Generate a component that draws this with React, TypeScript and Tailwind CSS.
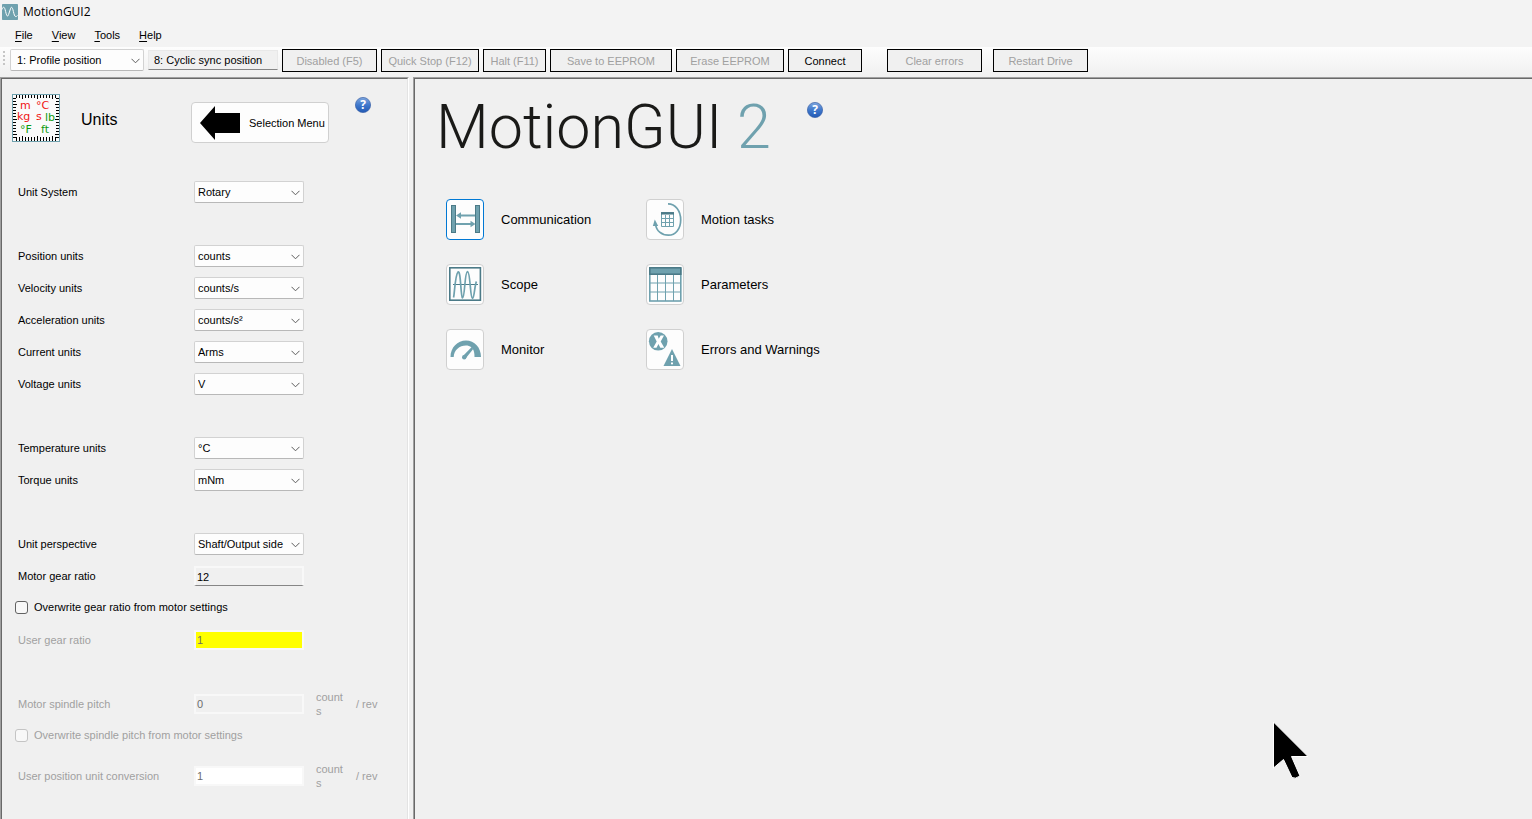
import React from "react";

const TEAL = "#6fa1ae";
const DEEP = "#4b7a87";

function HelpIcon() {
  return (
    <svg viewBox="0 0 16 16" className="block h-4 w-4">
      <defs>
        <linearGradient id="help" x1="0" y1="0" x2="0" y2="1">
          <stop offset="0" stopColor="#7fa6dd" />
          <stop offset="0.5" stopColor="#3f78cc" />
          <stop offset="1" stopColor="#2259b4" />
        </linearGradient>
      </defs>
      <circle cx="8" cy="8" r="7.6" fill="url(#help)" stroke="#3b62a8" strokeWidth="0.7" />
      <text x="8" y="12.4" textAnchor="middle" fontSize="12" fontWeight="700" fill="#fff" fontFamily="Open Sans, sans-serif">?</text>
    </svg>
  );
}

function HelpButton() {
  return (
    <button type="button" aria-label="Help" className="h-4 w-4">
      <HelpIcon />
    </button>
  );
}

function AppLogo() {
  return (
    <svg viewBox="0 0 16 16" className="h-4 w-4">
      <rect width="16" height="16" rx="0.8" fill={TEAL} />
      <path d="M0 5.5C1.5 1.5 2.6 3 3.6 7.5C4.6 12 5.6 13.5 6.6 10.5L8.4 5C9.4 2 10.4 3 11.4 7.5C12.4 12 13.2 14 15.5 11.5" fill="none" stroke="#fff" strokeWidth="1" />
    </svg>
  );
}

function UnitsIcon() {
  const ticks = Array.from({ length: 14 }, (_, i) => 5 + i * 3);
  return (
    <svg viewBox="0 0 48 48" className="h-12 w-12" fontFamily="DejaVu Sans, sans-serif" fontSize="11">
      <rect x="0.5" y="0.5" width="47" height="47" fill="#fafafa" stroke={TEAL} />
      {ticks.map((t, i) => {
        const n = i % 5 === 2 ? 4 : 3;
        return (
          <path
            key={t}
            d={`M${t - 0.5} 1v${n}M${t - 0.5} 47v${-n - 1}M1 ${t - 0.5}h${n}M47 ${t - 0.5}h${-n}`}
            stroke="#000"
            strokeWidth="1"
          />
        );
      })}
      <text x="8" y="15" fill="#f01414">m</text>
      <text x="24" y="15" fill="#f01414">°C</text>
      <text x="5" y="26" fill="#f01414">kg</text>
      <text x="24" y="26" fill="#f01414">s</text>
      <text x="33" y="27" fill="#109c10">lb</text>
      <text x="8" y="39" fill="#109c10">°F</text>
      <text x="29" y="39" fill="#109c10">ft</text>
    </svg>
  );
}

function CommunicationIcon() {
  return (
    <>
      <g fill={TEAL} stroke={DEEP}>
        <rect x="4.5" y="5.5" width="4" height="27" />
        <rect x="28.5" y="5.5" width="4" height="27" />
      </g>
      <path d="M12 15.5h16M9 24h16" stroke={TEAL} strokeWidth="2" />
      <path d="M9 15.5l5-3.2v6.4zM28.5 24l-5-3.2v6.4z" fill={TEAL} />
    </>
  );
}

function ScopeIcon() {
  return (
    <g fill="none">
      <rect x="2.8" y="2.8" width="30.6" height="32.4" stroke={DEEP} strokeWidth="1.6" />
      <path d="M6 19.5h25" stroke={DEEP} />
      <path d="M6.5 32.500C7.500 30 8 10 11 7C14 5 13.500 31 15.500 33C18 33 17.500 7 20.500 6.500C23.500 7 23 33 25.500 33.500C27.500 33 27.500 20 29.500 16.500" stroke={TEAL} strokeWidth="1.7" />
    </g>
  );
}

function MonitorIcon() {
  return (
    <g fill={TEAL}>
      <path d="M3.500 27C3.500 17.500 10.500 10.500 19 10.500S34 17.500 34 27H27.500C27.500 23.500 27 21.300 26 19.300L24.300 17.200C22.800 16 21 15.500 19 15.500C12.500 15.500 7 20 6.700 27Z" />
      <path d="M24.700 17L16.200 25.800L18.600 28.600L26.200 19Z" />
      <circle cx="17.200" cy="27.300" r="2.200" />
    </g>
  );
}

function MotionIcon() {
  return (
    <>
      <path d="M21 3.800C28.500 3.800 33.700 11 33.700 20S28.500 35.200 21.500 35.200C14.500 35.200 9.300 31 8.500 24" fill="none" stroke={TEAL} strokeWidth="1.700" />
      <path d="M7.800 19.500l-2 6.500h5.400z" fill={TEAL} />
      <path d="M14.500 13h12v13.500h-12zM18.500 15v12M22.500 15v12M15 18.500h12M15 22.500h12" fill="none" stroke={TEAL} />
      <path d="M14 13.300h13" stroke={DEEP} strokeWidth="2.500" />
    </>
  );
}

function ParametersIcon() {
  return (
    <g fill="none" stroke={TEAL}>
      <rect x="2.800" y="4" width="31" height="32" strokeWidth="1.600" />
      <path d="M10.500 10v26M18.500 10v26M26.500 10v26M3 18h31M3 27h31" />
      <rect x="2.800" y="2.800" width="31" height="6.400" fill={TEAL} stroke={DEEP} strokeWidth="1.600" />
    </g>
  );
}

function ErrorsIcon() {
  return (
    <>
      <circle cx="11.200" cy="11.300" r="9.300" fill={TEAL} />
      <path d="M6.700 5.500h4l1 3.200L13.700 5.500h3.300l-3.300 6l3.600 6.300h-4L11.500 14L9.500 17.800H6.200L9.700 11.500Z" fill="#fff" />
      <path d="M25 19L33.500 36H16.500Z" fill={TEAL} />
      <rect x="24" y="25" width="2" height="6" fill="#fff" />
      <rect x="24" y="32.500" width="2" height="1.800" fill="#fff" />
    </>
  );
}

function Drop({ id, label, value, options, className }: { id: string; label?: string; value: string; options?: string[]; className: string }) {
  return (
    <span className="relative block">
      <select
        id={id}
        aria-label={label}
        defaultValue={value}
        className={`block h-[22px] appearance-none rounded-xs border border-[#d2d2d2] border-b-[#b8b8b8] bg-[#fdfdfd] text-[11px] leading-4 text-black ${className}`}
      >
        {(options ?? [value]).map((o) => (
          <option key={o}>{o}</option>
        ))}
      </select>
      <svg viewBox="0 0 9 6" className="pointer-events-none absolute top-[9px] right-1 h-1.5 w-[9px]">
        <path d="M0.500 0.800L4.500 4.800L8.500 0.800" fill="none" stroke="#5c5c5c" />
      </svg>
    </span>
  );
}

const fieldClass = "block h-5 w-[110px] border-2 px-px text-[11px] leading-4 outline-none";

function Row({ id, label, muted, tall, children }: { id: string; label: string; muted?: boolean; tall?: boolean; children: React.ReactNode }) {
  return (
    <div className={`flex items-center ${tall ? "h-12" : "h-8"} ${muted ? "text-[#a0a0a0]" : "text-black"}`}>
      <label htmlFor={id} className="w-44 shrink-0">{label}</label>
      {children}
    </div>
  );
}

function PerRev() {
  return (
    <>
      <span className="ml-3 w-7 leading-[14px] break-all">counts</span>
      <span className="ml-3">/ rev</span>
    </>
  );
}

function Check({ id, label, disabled }: { id: string; label: string; disabled?: boolean }) {
  return (
    <div className={`-ml-[3px] flex h-8 items-center gap-1.5 pb-0.5 ${disabled ? "text-[#a0a0a0]" : "text-black"}`}>
      <input
        id={id}
        type="checkbox"
        disabled={disabled}
        className={`h-[13px] w-[13px] appearance-none rounded-[3px] border bg-[#f8f8f8] checked:bg-[#0067c0] ${disabled ? "border-[#c4c4c4]" : "border-[#626262]"}`}
      />
      <label htmlFor={id}>{label}</label>
    </div>
  );
}

function ToolButton({ text, className, enabled }: { text: string; className: string; enabled?: boolean }) {
  return (
    <button
      type="button"
      disabled={!enabled}
      className={`h-[23px] shrink-0 border border-black bg-[#f0f0f0] pt-px text-center whitespace-nowrap ${enabled ? "text-black" : "text-[#a0a0a0]"} ${className}`}
    >
      {text}
    </button>
  );
}

function Tile({ text, active, children }: { text: string; active?: boolean; children: React.ReactNode }) {
  const id = text.replace(/ /g, "-").toLowerCase();
  return (
    <div className="flex w-[200px] items-center gap-[17px]">
      <button
        type="button"
        aria-labelledby={id}
        className={`h-[41px] w-[38px] rounded-sm border bg-[#fdfdfd] ${active ? "border-[#0078d4]" : "border-[#d0d0d0]"}`}
      >
        <svg viewBox="0 0 36 39" className="block h-[39px] w-9 overflow-visible">
          {children}
        </svg>
      </button>
      <span id={id} className="text-[13px] leading-4 whitespace-nowrap">{text}</span>
    </div>
  );
}

const menus = ["File", "View", "Tools", "Help"];

export default function App() {
  return (
    <div className="relative flex min-h-screen flex-col overflow-x-hidden bg-[#f0f0f0] font-['Liberation_Sans',Arial,sans-serif] text-[11px] leading-[14px] text-black">
      <header className="flex h-6 items-center gap-[5px] bg-[#f3f3f3] pl-0.5">
        <AppLogo />
        <h1 className="font-['Open_Sans',sans-serif] text-[12px] leading-4">MotionGUI2</h1>
      </header>

      <nav className="flex h-[23px] items-center gap-[19px] bg-[#f3f3f3] pb-0.5 pl-[15px]">
        {menus.map((m) => (
          <button key={m} type="button">
            <span className="underline underline-offset-2">{m[0]}</span>
            {m.slice(1)}
          </button>
        ))}
      </nav>

      <div className="flex h-[30px] items-start bg-linear-to-b from-[#fdfdfd] to-[#f0f0f0] pt-0.5">
        <svg viewBox="0 0 10 22" className="h-[22px] w-2.5 shrink-0">
          <path d="M3 2h2v2h-2zM3 6h2v2h-2zM3 10h2v2h-2zM3 14h2v2h-2z" fill="#c6c6c6" />
        </svg>
        <div className="flex gap-1">
          <Drop id="mode" label="Operating mode" value="1: Profile position" className="w-[134px] pl-1.5" />
          <input
            aria-label="Active mode"
            readOnly
            value="8: Cyclic sync position"
            className="mt-px h-5 w-[130px] border border-[#e8e8e8] border-b-[#868686] bg-[#f0f0f0] px-[5px] text-[11px] leading-4 outline-none"
          />
          <ToolButton text="Disabled (F5)" className="w-[95px]" />
          <ToolButton text="Quick Stop (F12)" className="w-[98px]" />
          <ToolButton text="Halt (F11)" className="w-[63px]" />
          <ToolButton text="Save to EEPROM" className="w-[122px]" />
          <ToolButton text="Erase EEPROM" className="w-[108px]" />
          <ToolButton text="Connect" className="w-[74px]" enabled />
        </div>
        <div className="ml-[25px] flex gap-[11px]">
          <ToolButton text="Clear errors" className="w-[95px]" />
          <ToolButton text="Restart Drive" className="w-[95px]" />
        </div>
      </div>

      <div className="flex grow gap-1">
        <aside className="flex w-[409px] shrink-0 border-t border-r border-l border-t-[#a0a0a0] border-r-white border-l-[#a0a0a0]">
          <div className="grow border-t border-r border-l border-t-[#696969] border-r-[#e3e3e3] border-l-[#696969] pr-4 pl-4">
            <div className="-ml-1.5 flex h-[97px] items-start pt-[15px]">
              <UnitsIcon />
              <h2 className="mt-[18px] ml-[21px] w-[110px] text-[16px] leading-4">Units</h2>
              <button type="button" className="mt-2 flex h-[41px] w-[138px] items-center gap-[9px] rounded-sm border border-[#d0d0d0] bg-[#fdfdfd] pl-2">
                <svg viewBox="0 0 40 34" className="h-[34px] w-10">
                  <path d="M0 17L15 0V7H40V27H15V34Z" fill="#000" />
                </svg>
                Selection Menu
              </button>
              <span className="mt-[3px] ml-[26px]">
                <HelpButton />
              </span>
            </div>

            <form className="flex flex-col gap-8">
              <div>
                <Row id="system" label="Unit System">
                  <Drop id="system" value="Rotary" options={["Rotary", "Linear"]} className="w-[110px] pl-[3px]" />
                </Row>
              </div>
              <div>
                <Row id="position" label="Position units">
                  <Drop id="position" value="counts" className="w-[110px] pl-[3px]" />
                </Row>
                <Row id="velocity" label="Velocity units">
                  <Drop id="velocity" value="counts/s" className="w-[110px] pl-[3px]" />
                </Row>
                <Row id="acceleration" label="Acceleration units">
                  <Drop id="acceleration" value="counts/s²" className="w-[110px] pl-[3px]" />
                </Row>
                <Row id="current" label="Current units">
                  <Drop id="current" value="Arms" className="w-[110px] pl-[3px]" />
                </Row>
                <Row id="voltage" label="Voltage units">
                  <Drop id="voltage" value="V" className="w-[110px] pl-[3px]" />
                </Row>
              </div>
              <div>
                <Row id="temperature" label="Temperature units">
                  <Drop id="temperature" value="°C" className="w-[110px] pl-[3px]" />
                </Row>
                <Row id="torque" label="Torque units">
                  <Drop id="torque" value="mNm" className="w-[110px] pl-[3px]" />
                </Row>
              </div>
              <div>
                <Row id="perspective" label="Unit perspective">
                  <Drop id="perspective" value="Shaft/Output side" className="w-[110px] pl-[3px]" />
                </Row>
                <Row id="gear" label="Motor gear ratio">
                  <input id="gear" readOnly value="12" className={`${fieldClass} border-t-[#f8f8f8] border-r-[#f8f8f8] border-b border-l-[#f8f8f8] border-b-[#868686] bg-[#f0f0f0]`} />
                </Row>
                <Check id="overwrite-gear" label="Overwrite gear ratio from motor settings" />
                <Row id="user-gear" label="User gear ratio" muted>
                  <input id="user-gear" disabled value="1" className={`${fieldClass} border-[#f8f8f8] bg-[#ffff00] text-[#6d6d6d]`} />
                </Row>
              </div>
              <div>
                <Row id="pitch" label="Motor spindle pitch" muted>
                  <input id="pitch" disabled value="0" className={`${fieldClass} border-[#f8f8f8] bg-[#f0f0f0] text-[#6d6d6d]`} />
                  <PerRev />
                </Row>
                <Check id="overwrite-pitch" label="Overwrite spindle pitch from motor settings" disabled />
                <Row id="conversion" label="User position unit conversion" muted tall>
                  <input id="conversion" disabled value="1" className={`${fieldClass} border-[#f8f8f8] bg-white text-[#6d6d6d]`} />
                  <PerRev />
                </Row>
              </div>
            </form>
          </div>
        </aside>

        <main className="flex grow border-t border-l border-[#a0a0a0]">
          <div className="grow border-t border-l border-[#696969] pl-[31px]">
            <div className="flex h-[120px] items-start">
              <p className="-ml-2.5 mt-3 w-[371px] font-['Roboto',sans-serif] text-[61px] leading-[72px] font-[350] whitespace-pre text-[#1a1a18]">
                MotionGUI <span className="text-[#6fa1ae]">2</span>
              </p>
              <span className="mt-[23px]">
                <HelpButton />
              </span>
            </div>
            <div className="flex">
              <div className="flex flex-col gap-6">
                <Tile text="Communication" active><CommunicationIcon /></Tile>
                <Tile text="Scope"><ScopeIcon /></Tile>
                <Tile text="Monitor"><MonitorIcon /></Tile>
              </div>
              <div className="flex flex-col gap-6">
                <Tile text="Motion tasks"><MotionIcon /></Tile>
                <Tile text="Parameters"><ParametersIcon /></Tile>
                <Tile text="Errors and Warnings"><ErrorsIcon /></Tile>
              </div>
            </div>
          </div>
        </main>
      </div>

      <svg viewBox="0 0 36 58" className="pointer-events-none absolute top-[722px] left-[1272px] h-[58px] w-9">
        <path d="M1.500 0V46L11.500 37.500L20 55.500Q23 57.500 28 54L19.500 34.500H36Z" fill="#000" stroke="#fff" strokeWidth="1" />
      </svg>
    </div>
  );
}
